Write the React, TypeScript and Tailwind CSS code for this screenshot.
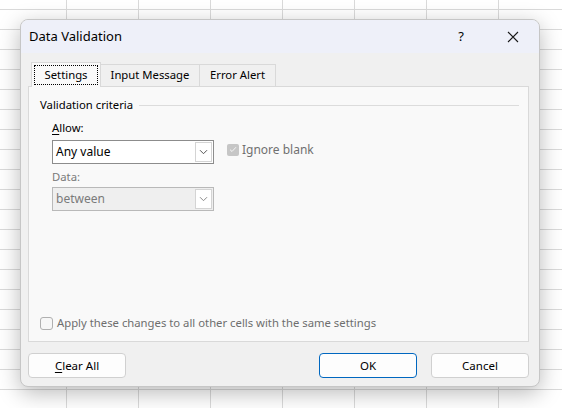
import React from "react";

function Chevron({ color = "#606060" }: { color?: string }) {
  return (
    <svg width="9" height="6" viewBox="0 0 9 6" fill="none">
      <path d="M1 1.2L4.5 4.7L8 1.2" stroke={color} strokeWidth="1" />
    </svg>
  );
}

function Select({ value, disabled }: { value: string; disabled?: boolean }) {
  return (
    <div
      className={
        "flex h-[24px] w-[162px] " +
        (disabled
          ? "border border-[#b9b9b9] bg-[#efefef]"
          : "border border-[#8c8c8c] bg-white")
      }
    >
      <div
        className={
          "flex flex-1 items-center pl-[3px] text-[12px] " +
          (disabled ? "text-[#7a7a7a]" : "text-black")
        }
      >
        {value}
      </div>
      <div className="my-[1px] mr-[1px] flex w-[17px] items-center justify-center border border-[#d4d4d4] bg-white">
        <Chevron color={disabled ? "#8a8a8a" : "#555"} />
      </div>
    </div>
  );
}

export default function App() {
  return (
    <div
      className="relative h-[408px] w-[562px] overflow-hidden bg-white"
      style={{ fontFamily: '"Noto Sans", "Open Sans", sans-serif' }}
    >
      <svg className="absolute inset-0" width="562" height="408">
        <defs>
          <pattern
            id="grid"
            x="66"
            y="9"
            width="72"
            height="20"
            patternUnits="userSpaceOnUse"
          >
            <path d="M0.5 0V20M0 0.5H72" stroke="#dadada" strokeWidth="1" />
          </pattern>
        </defs>
        <rect width="562" height="408" fill="url(#grid)" />
      </svg>

      <div className="absolute left-[20px] top-[19px] flex h-[368px] w-[520px] flex-col overflow-hidden rounded-[8px] border border-[#c6c6c6] bg-[#f0f0f0] shadow-[0_6px_22px_rgba(0,0,0,0.28)]">
        {/* Title bar */}
        <div className="flex h-[33px] shrink-0 items-center bg-[#eef0f9] pl-[8px] text-[13px] text-black">
          <span>Data Validation</span>
          <span className="ml-auto mr-[43px] text-[13px]">?</span>
          <svg width="12" height="12" viewBox="0 0 12 12" className="mr-[20px]">
            <path d="M1 1L11 11M11 1L1 11" stroke="#1a1a1a" strokeWidth="1.1" />
          </svg>
        </div>

        {/* Body */}
        <div className="flex flex-1 flex-col pl-[7px] pr-[10px] pt-[9px]">
          {/* Tabs */}
          <div className="relative z-10 flex h-[24px] items-end pl-[3px] text-[11.3px] text-black">
            <div className="-mb-px flex h-[25px] w-[70px] items-center justify-center border border-b-0 border-[#d9d9d9] bg-[#f9f9f9] px-[1px]">
              <div className="flex h-[20px] w-[64px] items-center justify-center border border-dotted border-black">
                Settings
              </div>
            </div>
            <div className="flex h-[22px] w-[99px] items-center justify-center border-r border-t border-[#d9d9d9] bg-[#f0f0f0]">
              Input Message
            </div>
            <div className="flex h-[22px] w-[76px] items-center justify-center border-r border-t border-[#d9d9d9] bg-[#f0f0f0]">
              Error Alert
            </div>
          </div>

          {/* Panel */}
          <div className="flex h-[256px] flex-col border border-[#d9d9d9] bg-[#f9f9f9] pl-[11px] pt-[10px] text-[11.3px]">
            <div className="flex h-[16px] items-center pr-[9px] text-black">
              <span>Validation criteria</span>
              <div className="ml-[6px] h-px flex-1 bg-[#dcdcdc]" />
            </div>

            <div className="pl-[12px]">
              <div className="mt-[7px] h-[16px] leading-[16px] text-black">
                <span className="underline underline-offset-2">A</span>llow:
              </div>
              <div className="mt-[4px] flex items-center">
                <Select value="Any value" />
                <div className="ml-[13px] -mt-[5px] flex items-center">
                  <div className="flex h-[12px] w-[12px] items-center justify-center rounded-[2px] bg-[#c6c6c6]">
                    <svg width="8" height="7" viewBox="0 0 8 7">
                      <path
                        d="M1 3.6L3 5.5L7 1.2"
                        stroke="#f4f4f4"
                        strokeWidth="1"
                        fill="none"
                      />
                    </svg>
                  </div>
                  <span className="ml-[3px] text-[12px] text-[#707070]">Ignore blank</span>
                </div>
              </div>
              <div className="mt-[5px] h-[16px] leading-[16px] text-[#7a7a7a]">
                Data:
              </div>
              <div className="mt-[2px]">
                <Select value="between" disabled />
              </div>
            </div>

            <div className="mt-auto mb-[10px] flex h-[16px] items-center">
              <div className="h-[13px] w-[13px] rounded-[3px] border border-[#b0b0b0] bg-[#f7f7f7]" />
              <span className="ml-[4px] text-[#6e6e6e]">
                Apply these changes to all other cells with the same settings
              </span>
            </div>
          </div>

          {/* Buttons */}
          <div className="mt-[11px] flex text-[11.5px] text-black">
            <button className="flex h-[25px] w-[98px] items-center justify-center rounded-[4px] border border-[#d0d0d0] bg-[#fdfdfd]">
              <span className="underline underline-offset-2">C</span>lear All
            </button>
            <button className="ml-auto flex h-[25px] w-[98px] items-center justify-center rounded-[4px] border border-[#0067c0] bg-[#fdfdfd]">
              OK
            </button>
            <button className="ml-[14px] flex h-[25px] w-[98px] items-center justify-center rounded-[4px] border border-[#d0d0d0] bg-[#fdfdfd]">
              Cancel
            </button>
          </div>
        </div>
      </div>
    </div>
  );
}
